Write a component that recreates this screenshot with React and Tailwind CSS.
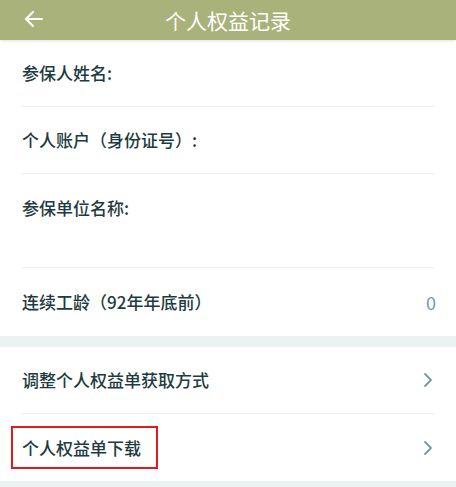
export default function App() {
  const font = { fontFamily: '"Noto Sans CJK SC", "Noto Sans", sans-serif' };
  return (
    <div className="w-[456px] h-[487px] bg-white overflow-hidden" style={font}>
      {/* Header */}
      <div className="relative h-[40px] bg-[#a9b27b] flex items-center justify-center shadow-[0_1px_3px_rgba(0,0,0,0.12)]">
        <svg className="absolute left-[24px] top-[10px]" width="20" height="18" viewBox="0 0 20 18" fill="none" stroke="white" strokeWidth="2.2" strokeLinecap="round" strokeLinejoin="round">
          <path d="M18 9H2.5" />
          <path d="M9 2L2 9l7 7" />
        </svg>
        <span className="text-white text-[21px] leading-none">个人权益记录</span>
      </div>

      {/* Info rows */}
      <div className="mx-[22px]">
        <div className="h-[67px] flex items-center border-b border-[#edf3f3]">
          <span className="text-[17px] font-medium text-[#1d3b40]">参保人姓名:</span>
        </div>
        <div className="h-[67px] flex items-center border-b border-[#edf3f3]">
          <span className="text-[17px] font-medium text-[#1d3b40]">个人账户（身份证号）:</span>
        </div>
        <div className="h-[94px] flex items-start pt-[21px] border-b border-[#edf3f3]">
          <span className="text-[17px] font-medium text-[#1d3b40]">参保单位名称:</span>
        </div>
        <div className="h-[68px] flex items-center justify-between">
          <span className="text-[17px] font-medium text-[#1d3b40]">连续工龄（92年年底前）</span>
          <span className="text-[18px] text-[#6b9ea2] mr-[-2px]">0</span>
        </div>
      </div>

      <div className="h-[11px] bg-[#ebf2f2]" />

      {/* Action rows */}
      <div className="mx-[22px]">
        <div className="h-[67px] flex items-center justify-between border-b border-[#edf3f3]">
          <span className="text-[17px] font-medium text-[#1d3b40]">调整个人权益单获取方式</span>
          <Chevron />
        </div>
        <div className="relative h-[67px] flex items-center justify-between">
          <span className="text-[17px] font-medium text-[#1d3b40]">个人权益单下载</span>
          <Chevron />
          <div className="absolute left-[-11px] top-[12px] w-[147px] h-[43px] border-2 border-[#e3191d]" />
        </div>
      </div>

      <div className="h-[11px] bg-[#ebf2f2]" />
    </div>
  );
}

function Chevron() {
  return (
    <svg className="mr-[1px]" width="10" height="16" viewBox="0 0 10 16" fill="none" stroke="#6b9ea2" strokeWidth="1.8" strokeLinecap="round" strokeLinejoin="round">
      <path d="M2 2l6 6-6 6" />
    </svg>
  );
}
